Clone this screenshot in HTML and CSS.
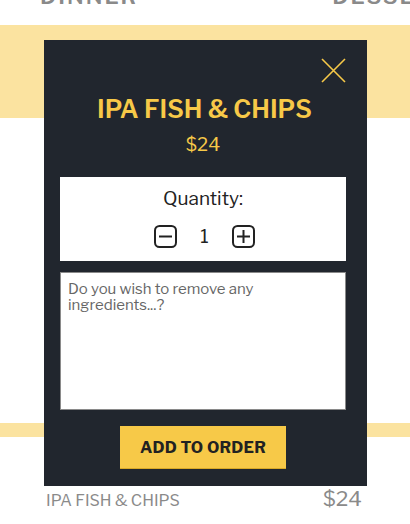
FILE: index.html
```html
<!DOCTYPE html>
<html lang="en">
<head>
<meta charset="utf-8">
<title>Menu</title>
<link rel="stylesheet" href="styles.css">
</head>
<body>
<div class="page">
  <nav class="tabs">
    <span class="tab">DINNER</span>
    <span class="tab">DESSERT</span>
  </nav>
  <section class="band band-top"></section>
  <section class="content"></section>
  <section class="band band-thin"></section>
  <div class="menu-row">
    <span class="menu-name">IPA FISH &amp; CHIPS</span>
    <span class="menu-price">$24</span>
  </div>
</div>

<div class="modal">
  <button class="close" aria-label="Close">
    <svg width="25" height="25" viewBox="0 0 25 25"><path d="M1 1L24 24M24 1L1 24" stroke="#f7c948" stroke-width="1.6" fill="none"/></svg>
  </button>
  <h1 class="title">IPA FISH &amp; CHIPS</h1>
  <div class="price">$24</div>
  <div class="qty-box">
    <div class="qty-label">Quantity:</div>
    <div class="qty-controls">
      <svg class="qty-btn" width="23" height="23" viewBox="0 0 23 23"><rect x="1" y="1" width="21" height="21" rx="4.5" stroke="#222" stroke-width="2" fill="none"/><path d="M5 11.5H18" stroke="#222" stroke-width="2"/></svg>
      <span class="qty-num">1</span>
      <svg class="qty-btn" width="23" height="23" viewBox="0 0 23 23"><rect x="1" y="1" width="21" height="21" rx="4.5" stroke="#222" stroke-width="2" fill="none"/><path d="M5 11.5H18M11.5 5V18" stroke="#222" stroke-width="2"/></svg>
    </div>
  </div>
  <textarea class="notes" placeholder="Do you wish to remove any ingredients...?"></textarea>
  <button class="add">ADD TO ORDER</button>
</div>
</body>
</html>
```

FILE: styles.css
```css
* { box-sizing: border-box; }
html, body { margin: 0; padding: 0; background: #fff; }
body { font-family: "Libre Franklin", "Open Sans", "Noto Sans", sans-serif; overflow: hidden; }

.page { display: flex; flex-direction: column; }
.tabs {
  display: flex;
  justify-content: space-between;
  margin-top: -14px;
  height: 39px;
  padding: 0 0 0 40px;
  font-size: 22px;
  font-weight: 600;
  color: #8a8a8a;
  letter-spacing: 2px;
  line-height: 20px;
  white-space: nowrap;
  overflow: hidden;
}
.tab:last-child { margin-right: -40px; }
.band { background: #fbe3a0; }
.band-top { height: 93px; }
.content { height: 305px; }
.band-thin { height: 14px; }
.menu-row {
  display: flex;
  justify-content: space-between;
  align-items: baseline;
  padding: 49px 48px 0 46px;
  color: #8a8a8a;
}
.menu-name { font-size: 16px; }
.menu-price { font-size: 21px; }

.modal {
  position: absolute;
  top: 40px;
  left: 44px;
  width: 323px;
  height: 446px;
  background: #21262e;
  padding: 18px 21px 0 16px;
  display: flex;
  flex-direction: column;
  align-items: stretch;
}
.close {
  align-self: flex-end;
  background: none;
  border: 0;
  padding: 0;
  width: 25px;
  height: 25px;
  display: block;
}
.close svg { display: block; }
.title {
  margin: 11px 0 0;
  text-align: center;
  color: #f7c948;
  font-size: 25px;
  line-height: 30px;
  font-weight: 600;
  padding-left: 3px;
}
.price {
  text-align: center;
  color: #f7c948;
  font-size: 18.5px;
  line-height: 22px;
  margin-top: 10px;
}
.qty-box {
  margin-top: 21px;
  background: #fff;
  height: 84px;
  display: flex;
  flex-direction: column;
  align-items: center;
  padding-top: 10px;
}
.qty-label { font-size: 19px; line-height: 23px; color: #222; }
.qty-controls {
  display: flex;
  align-items: center;
  gap: 23px;
  margin-top: 15px;
  padding-left: 3px;
}
.qty-btn { display: block; }
.qty-num { font-size: 18px; color: #222; line-height: 22px; }
.notes {
  margin-top: 11px;
  height: 138px;
  resize: none;
  border: 1px solid #8a8a8a;
  padding: 8px 40px 8px 7px;
  font-family: inherit;
  font-size: 15px;
  line-height: 16px;
}
.notes::placeholder { color: #666; }
.add {
  align-self: center;
  margin-top: 16px;
  width: 166px;
  height: 43px;
  background: #f7c948;
  border: 0;
  border-bottom: 1px solid #d9a928;
  color: #222;
  font-family: inherit;
  font-weight: 700;
  font-size: 16px;
  letter-spacing: 0.2px;
}
```
